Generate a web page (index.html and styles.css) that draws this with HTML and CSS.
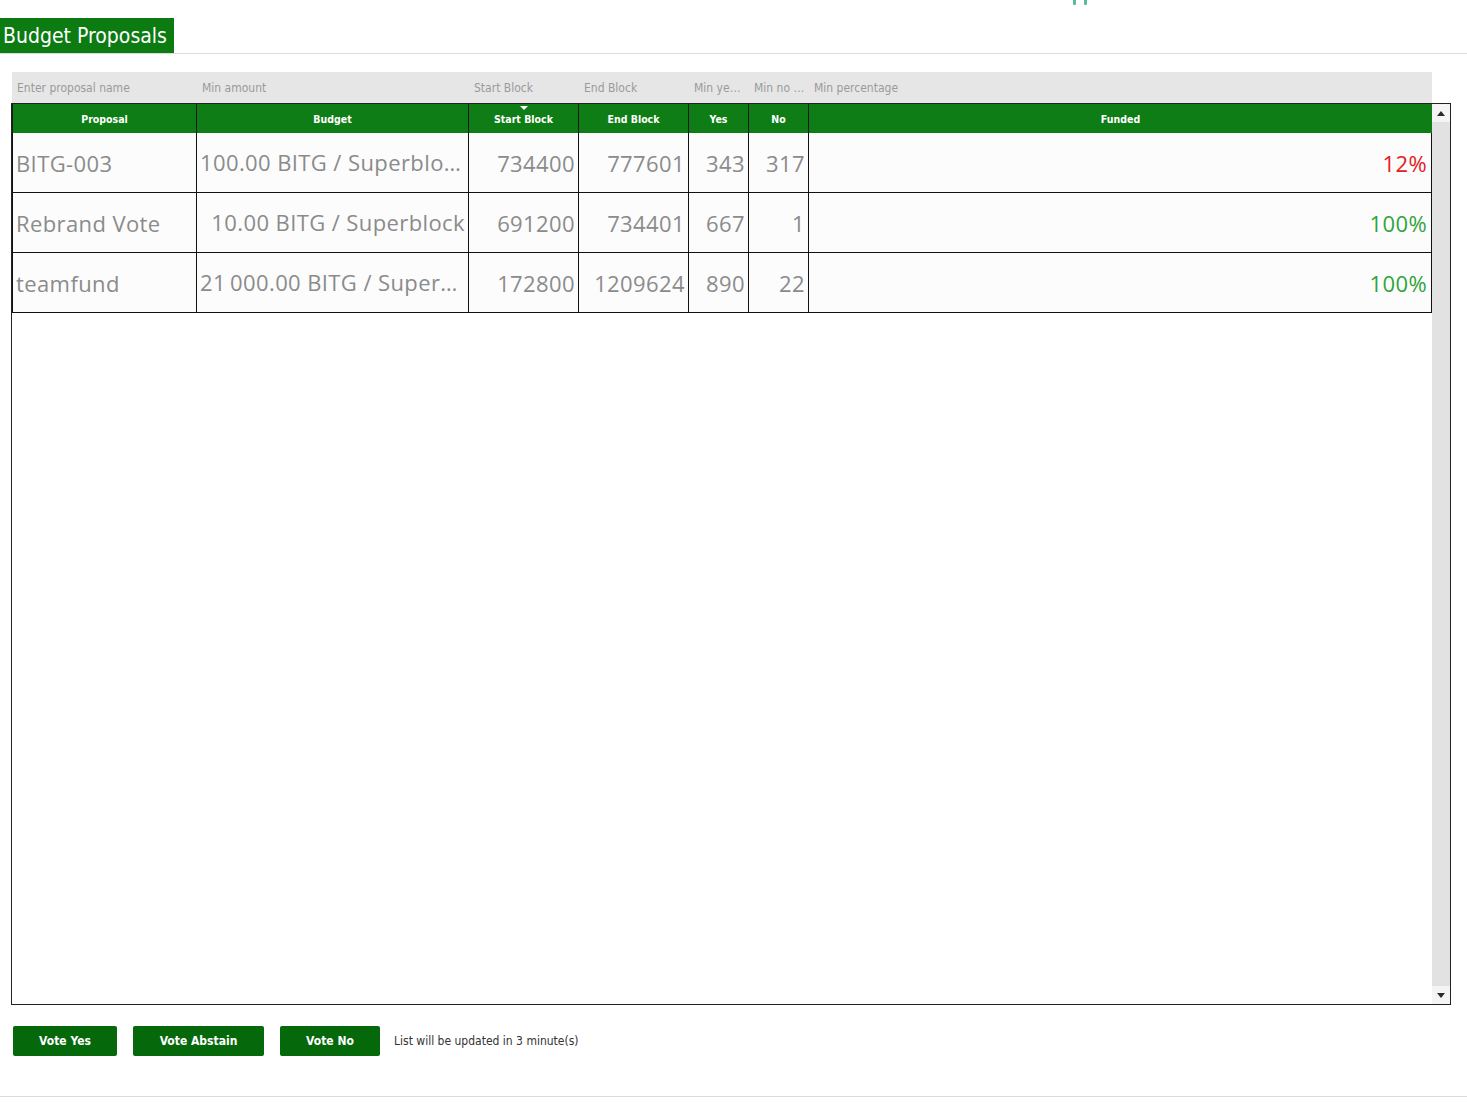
FILE: index.html
```html
<!DOCTYPE html>
<html lang="en">
<head>
<meta charset="utf-8">
<title>Budget Proposals</title>
<link rel="stylesheet" href="styles.css">
</head>
<body>
<div class="topmark"><span></span><span></span></div>
<header class="titlebar">
  <h1 class="title">Budget Proposals</h1>
</header>
<main class="content">
  <div class="filters cols">
    <input class="filter" placeholder="Enter proposal name">
    <input class="filter" placeholder="Min amount">
    <input class="filter" placeholder="Start Block">
    <input class="filter" placeholder="End Block">
    <input class="filter" placeholder="Min yes votes">
    <input class="filter" placeholder="Min no votes">
    <input class="filter" placeholder="Min percentage">
  </div>
  <div class="tablebox">
    <div class="grid">
      <div class="hrow cols">
        <div class="hcell">Proposal</div>
        <div class="hcell">Budget</div>
        <div class="hcell sorted">Start Block</div>
        <div class="hcell">End Block</div>
        <div class="hcell">Yes</div>
        <div class="hcell">No</div>
        <div class="hcell last">Funded</div>
      </div>
      <div class="row cols">
        <div class="cell name">BITG-003</div>
        <div class="cell budget">100.00 BITG / Superblock</div>
        <div class="cell num">734400</div>
        <div class="cell num">777601</div>
        <div class="cell num">343</div>
        <div class="cell num">317</div>
        <div class="cell num pct low">12%</div>
      </div>
      <div class="row cols">
        <div class="cell name">Rebrand Vote</div>
        <div class="cell budget">10.00 BITG / Superblock</div>
        <div class="cell num">691200</div>
        <div class="cell num">734401</div>
        <div class="cell num">667</div>
        <div class="cell num">1</div>
        <div class="cell num pct ok">100%</div>
      </div>
      <div class="row cols">
        <div class="cell name">teamfund</div>
        <div class="cell budget">21&#8201;000.00 BITG / Superblock</div>
        <div class="cell num">172800</div>
        <div class="cell num">1209624</div>
        <div class="cell num">890</div>
        <div class="cell num">22</div>
        <div class="cell num pct ok">100%</div>
      </div>
    </div>
    <div class="scrollbar">
      <div class="sbtn"><span class="tri up"></span></div>
      <div class="track"></div>
      <div class="sbtn"><span class="tri down"></span></div>
    </div>
  </div>
  <div class="actions">
    <button class="btn yes">Vote Yes</button>
    <button class="btn abstain">Vote Abstain</button>
    <button class="btn no">Vote No</button>
    <span class="status">List will be updated in 3 minute(s)</span>
  </div>
</main>
<footer class="footline"></footer>
</body>
</html>
```
FILE: styles.css
```css
* { box-sizing: border-box; }
html, body { margin: 0; padding: 0; background: #fff; }
body {
  font-family: "DejaVu Sans Condensed", "DejaVu Sans", sans-serif;
  width: 1467px;
  height: 1118px;
  overflow: hidden;
  position: relative;
}

.topmark {
  position: absolute;
  left: 1073px;
  top: 0;
  display: flex;
  gap: 8px;
}
.topmark span {
  display: block;
  width: 3px;
  height: 5px;
  background: #5bb99c;
  border-radius: 0 0 1px 1px;
}

.titlebar {
  padding-top: 18px;
  border-bottom: 1px solid #dcdcdc;
}
.title {
  display: inline-block;
  margin: 0;
  height: 35px;
  width: 174px;
  padding: 0 0 0 3px;
  background: #0b7b12;
  color: #fff;
  font-weight: normal;
  font-size: 21px;
  letter-spacing: 0;
  line-height: 37px;
}

.content {
  padding: 18px 0 0 11px;
}

.cols {
  display: grid;
  grid-template-columns: 185px 272px 110px 110px 60px 60px 623px;
}

.filters {
  margin-left: 1px;
  width: 1420px;
  height: 31px;
  background: #e6e6e6;
}
.filter {
  border: 0;
  background: transparent;
  padding: 1px 4px 0 5px;
  margin: 0;
  height: 31px;
  width: 100%;
  min-width: 0;
  font-family: "DejaVu Sans Condensed", "DejaVu Sans", sans-serif;
  font-size: 12px;
  color: #555;
  text-overflow: ellipsis;
  outline: none;
}
.filter::placeholder { color: #9a9a9a; }

.tablebox {
  display: flex;
  width: 1440px;
  height: 902px;
  border: 1px solid #222;
}
.grid {
  width: 1420px;
}
.hrow {
  height: 29px;
  background: #0f7d16;
}
.hcell {
  position: relative;
  color: #fff;
  font-weight: bold;
  font-size: 10.5px;
  display: flex;
  align-items: center;
  justify-content: center;
  padding-top: 1px;
  border-right: 1px solid #1a1a1a;
}
.hcell:first-child { border-left: 1px solid #1a1a1a; }
.hcell.last { border-right: 0; }
.hcell.sorted::before {
  content: "";
  position: absolute;
  top: 2px;
  left: 50%;
  margin-left: -4px;
  border-left: 4px solid transparent;
  border-right: 4px solid transparent;
  border-top: 4px solid #fff;
}

.row {
  height: 60px;
  background: #fcfcfc;
}
.cell {
  font-family: "Open Sans", "Noto Sans", sans-serif;
  font-size: 22px;
  letter-spacing: 0.4px;
  color: #8b8b8b;
  display: flex;
  align-items: center;
  padding: 0 3px 0 3px;
  border-right: 1px solid #111;
  border-bottom: 1px solid #111;
  white-space: nowrap;
  overflow: hidden;
  min-width: 0;
}
.cell.name { border-left: 1px solid #111; }
.cell.budget {
  display: block;
  line-height: 59px;
  text-align: right;
  text-overflow: ellipsis;
}
.cell.num { justify-content: flex-end; }
.cell.pct { padding-right: 4px; }
.cell.low { color: #e3201c; }
.cell.ok { color: #2ea53a; }

.scrollbar {
  width: 18px;
  display: flex;
  flex-direction: column;
  background: #e2e2e2;
}
.sbtn {
  height: 18px;
  background: #f4f4f4;
  display: flex;
  align-items: center;
  justify-content: center;
}
.track { flex: 1; background: #e2e2e2; }
.tri {
  width: 0;
  height: 0;
  border-left: 4px solid transparent;
  border-right: 4px solid transparent;
}
.tri.up { border-bottom: 5px solid #2a2a2a; }
.tri.down { border-top: 5px solid #2a2a2a; }

.actions {
  display: flex;
  align-items: center;
  margin: 21px 0 0 2px;
  height: 30px;
}
.btn {
  height: 30px;
  border: 0;
  border-radius: 2px;
  background: #05680b;
  color: #fff;
  font-family: "DejaVu Sans Condensed", "DejaVu Sans", sans-serif;
  font-weight: bold;
  font-size: 12px;
  padding: 0;
  margin-right: 16px;
}
.btn.yes { width: 104px; }
.btn.abstain { width: 131px; }
.btn.no { width: 100px; margin-right: 14px; }
.status {
  font-size: 12px;
  color: #333;
}

.footline {
  margin-top: 40px;
  border-top: 1px solid #dcdcdc;
}
```
